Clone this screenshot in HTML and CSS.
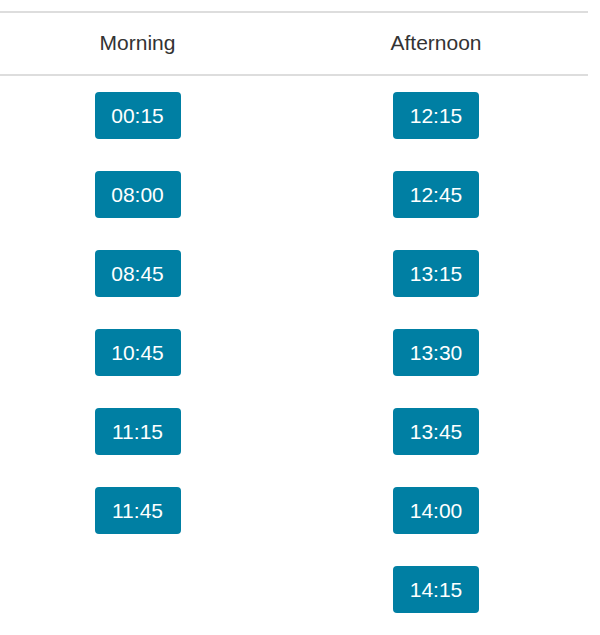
FILE: index.html
```html
<!DOCTYPE html>
<html lang="en">
<head>
<meta charset="utf-8">
<title>Times</title>
<link rel="stylesheet" href="styles.css">
</head>
<body>
<div class="wrap">
<table class="times">
  <colgroup><col class="c1"><col class="c2"></colgroup>
  <thead>
    <tr><th>Morning</th><th>Afternoon</th></tr>
  </thead>
  <tbody>
    <tr><td><button class="slot">00:15</button></td><td><button class="slot">12:15</button></td></tr>
    <tr><td><button class="slot">08:00</button></td><td><button class="slot">12:45</button></td></tr>
    <tr><td><button class="slot">08:45</button></td><td><button class="slot">13:15</button></td></tr>
    <tr><td><button class="slot">10:45</button></td><td><button class="slot">13:30</button></td></tr>
    <tr><td><button class="slot">11:15</button></td><td><button class="slot">13:45</button></td></tr>
    <tr><td><button class="slot">11:45</button></td><td><button class="slot">14:00</button></td></tr>
    <tr><td></td><td><button class="slot">14:15</button></td></tr>
  </tbody>
</table>
</div>
</body>
</html>
```

FILE: styles.css
```css
html, body {
  margin: 0;
  padding: 0;
  background: #ffffff;
}
body {
  font-family: "Liberation Sans", Arial, Helvetica, sans-serif;
  color: #333333;
}
.wrap {
  width: 588px;
  padding-top: 11px;
}
.times {
  width: 588px;
  border-collapse: collapse;
  table-layout: fixed;
}
.c1 { width: 284px; }
.c2 { width: 304px; }
.times th {
  font-size: 21px;
  font-weight: normal;
  line-height: 30px;
  padding: 15px 0 16px 0;
  text-align: center;
  border-top: 2px solid #dddddd;
  border-bottom: 2px solid #dddddd;
  color: #333333;
}
.times td {
  padding: 16px 0;
  text-align: center;
  vertical-align: top;
  height: 47px;
}
.times th:first-child,
.times td:first-child {
  padding-right: 9px;
}
.slot {
  display: inline-block;
  box-sizing: border-box;
  width: 86px;
  height: 47px;
  padding: 0;
  line-height: 47px;
  font-family: "Liberation Sans", Arial, Helvetica, sans-serif;
  font-size: 21px;
  color: #ffffff;
  background: #007fa3;
  border: none;
  border-radius: 4px;
  vertical-align: top;
  text-align: center;
}
```
